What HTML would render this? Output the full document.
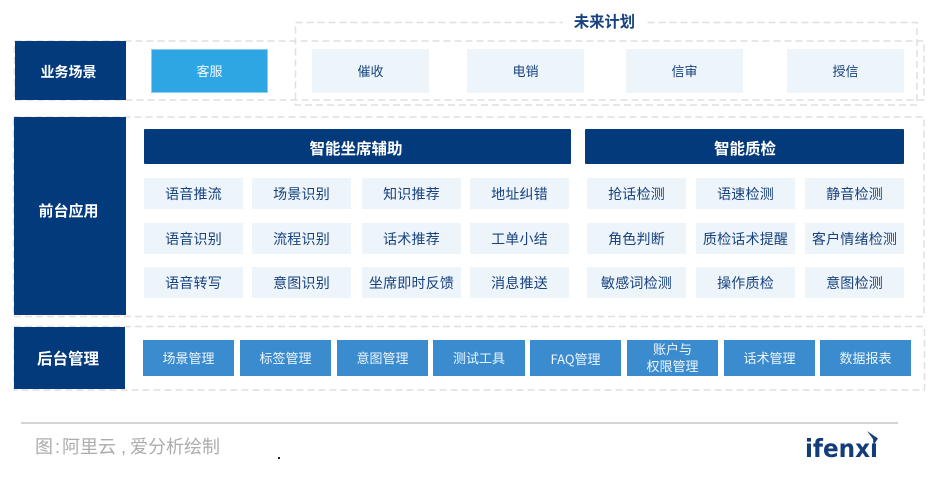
<!DOCTYPE html>
<html lang="zh">
<head>
<meta charset="utf-8">
<style>
html,body{margin:0;padding:0;background:#fff}
body{width:936px;height:480px;position:relative;overflow:hidden;font-family:"Liberation Sans","Noto Sans CJK SC",sans-serif}
.a{position:absolute;box-sizing:border-box}
.dk{background:#033a7c;color:#fff;font-weight:700;display:flex;align-items:center;justify-content:center}
.c{background:#edf4fa;color:#17427f;font-size:14px;display:flex;align-items:center;justify-content:center;letter-spacing:.2px;white-space:nowrap;top:0}
.b{background:#3b8ccf;color:#eef5fb;font-size:13px;display:flex;align-items:center;justify-content:center;text-align:center;line-height:17px;top:340px;height:36px;white-space:nowrap}
.r1{top:178px;height:31px}.r2{top:223px;height:31px}.r3{top:267px;height:31px}
.t1{top:49px;height:44px;width:117px;font-size:13px;letter-spacing:0;padding-bottom:2px}
.x1{left:144px;width:99px}.x2{left:252px;width:99px}.x3{left:362px;width:99px}.x4{left:470px;width:99px}
.x5{left:587px;width:99px}.x6{left:696px;width:99px}.x7{left:805px;width:99px}
</style>
</head>
<body>
<svg class="a" style="left:0;top:0" width="936" height="480" fill="none" stroke="#dfdfdf" stroke-width="1.5" stroke-dasharray="7 4">
<rect x="14.5" y="41" width="909.5" height="59"/>
<rect x="295.5" y="22.5" width="621.5" height="82.5"/>
<rect x="13.5" y="117" width="910.5" height="199.5"/>
<rect x="14" y="326.5" width="910.5" height="63.5"/>
</svg>
<div class="a" style="left:563px;top:14px;width:83px;height:16px;background:#fff;color:#17427f;font-size:15.3px;font-weight:700;line-height:16px;padding-top:0;text-align:center"><span style="position:relative;top:1px">未来计划</span></div>
<div class="a dk" style="left:15px;top:41px;width:111px;height:59px;font-size:14px;padding:2px 4px 0 0">业务场景</div>
<div class="a c t1" style="left:151px;top:49px;background:#2ea6e3;color:#f2f9fd;box-shadow:0 0 0 1px #8ccdf0 inset">客服</div>
<div class="a c t1" style="left:312px;top:49px">催收</div>
<div class="a c t1" style="left:467px;top:49px">电销</div>
<div class="a c t1" style="left:626px;top:49px">信审</div>
<div class="a c t1" style="left:787px;top:49px">授信</div>

<div class="a dk" style="left:14px;top:117px;width:112px;height:198px;font-size:15px;padding:0 3px 12px 0">前台应用</div>
<div class="a dk" style="left:144px;top:129px;width:427px;height:35px;font-size:15.5px;letter-spacing:0;border-radius:1px;padding:3px 3px 0 0">智能坐席辅助</div>
<div class="a dk" style="left:585px;top:129px;width:319px;height:35px;font-size:15.5px;letter-spacing:0;border-radius:1px;padding:3px 0 0 1px">智能质检</div>

<div class="a c r1 x1">语音推流</div><div class="a c r1 x2">场景识别</div><div class="a c r1 x3">知识推荐</div><div class="a c r1 x4">地址纠错</div>
<div class="a c r1 x5">抢话检测</div><div class="a c r1 x6">语速检测</div><div class="a c r1 x7">静音检测</div>
<div class="a c r2 x1">语音识别</div><div class="a c r2 x2">流程识别</div><div class="a c r2 x3">话术推荐</div><div class="a c r2 x4">工单小结</div>
<div class="a c r2 x5">角色判断</div><div class="a c r2 x6">质检话术提醒</div><div class="a c r2 x7">客户情绪检测</div>
<div class="a c r3 x1">语音转写</div><div class="a c r3 x2">意图识别</div><div class="a c r3 x3">坐席即时反馈</div><div class="a c r3 x4">消息推送</div>
<div class="a c r3 x5">敏感词检测</div><div class="a c r3 x6">操作质检</div><div class="a c r3 x7">意图检测</div>

<div class="a dk" style="left:14px;top:327px;width:111px;height:62px;font-size:15.5px;padding:0 3px 1px 0">后台管理</div>
<div class="a b" style="left:143px;width:91px">场景管理</div>
<div class="a b" style="left:240px;width:91px">标签管理</div>
<div class="a b" style="left:337px;width:91px">意图管理</div>
<div class="a b" style="left:433px;width:92px">测试工具</div>
<div class="a b" style="left:530px;width:91px"><span style="font-family:'Noto Sans CJK SC',sans-serif">FAQ管理</span></div>
<div class="a b" style="left:627px;width:91px">账户与<br>权限管理</div>
<div class="a b" style="left:724px;width:91px">话术管理</div>
<div class="a b" style="left:820px;width:91px">数据报表</div>

<div class="a" style="left:21px;top:422px;width:877px;height:2px;background:#d4d4d4"></div>
<div class="a" style="left:35px;top:435px;color:#acacac;font-size:18px;line-height:24px;white-space:nowrap">图<span style="margin:0 2px">:</span>阿里云 ,<span style="margin-left:4px">爱分析绘制</span></div>
<div class="a" style="left:278px;top:457px;width:2px;height:2px;background:#222"></div>

<svg class="a" style="left:800px;top:428px" width="84" height="34" viewBox="0 0 84 34">
<text x="5" y="29" font-family="'DejaVu Sans',sans-serif" font-weight="700" font-size="25" fill="#143b7a" textLength="73" lengthAdjust="spacingAndGlyphs">ifenxi</text>
<rect x="70" y="0" width="12" height="15" fill="#fff"/>
<path d="M67 3 L78 10.5 L73.5 17 L73 11 Z" fill="#143b7a"/>
</svg>
</body>
</html>
